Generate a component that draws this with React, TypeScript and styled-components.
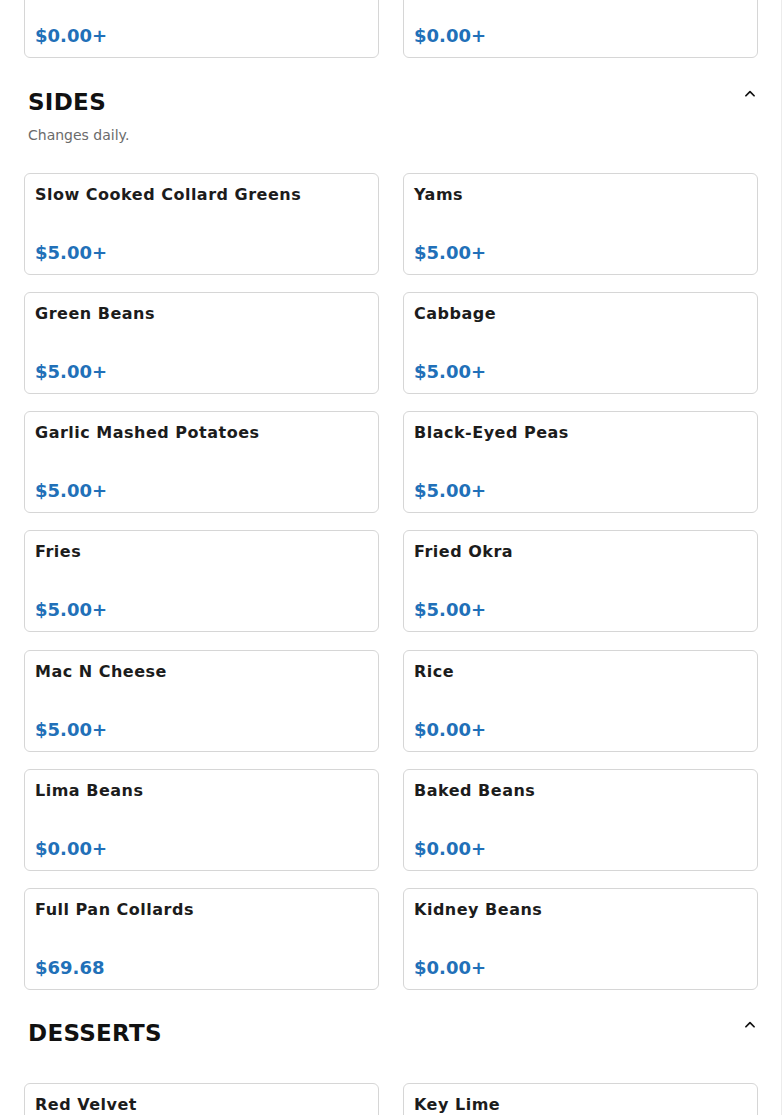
import React from 'react';
import styled, { createGlobalStyle } from 'styled-components';

const GlobalStyle = createGlobalStyle`
    html, body {
        margin: 0;
        padding: 0;
        background: #ffffff;
    }
    body {
        font-family: 'DejaVu Sans', 'Liberation Sans', sans-serif;
        color: #1a1a1a;
    }
    * {
        box-sizing: border-box;
    }
`;

const Page = styled.main`
    width: 782px;
    padding: 0 23px 40px 24px;
    border-right: 1px solid #ececec;
    overflow: hidden;
`;

// the row above "Sides" is scrolled half out of view
const ScrolledOff = styled.div`
    margin-top: -44px;
    padding-bottom: 1px;
`;

const Section = styled.section`
    padding-top: 29px;
`;

const SectionHeader = styled.div`
    display: flex;
    justify-content: space-between;
    align-items: flex-start;
    padding-left: 4px;
`;

const SectionTitle = styled.h2`
    margin: 0;
    font-size: 23px;
    line-height: 28px;
    font-weight: 700;
    letter-spacing: 0.3px;
    color: #111;
`;

const Toggle = styled.button`
    display: flex;
    align-items: center;
    justify-content: center;
    width: 16px;
    height: 16px;
    margin-top: -2px;
    padding: 0;
    border: none;
    background: none;
    color: #111;
`;

const Description = styled.p`
    margin: 9px 0 0 4px;
    font-size: 14px;
    line-height: 20px;
    color: #6b6b6b;
`;

const Grid = styled.div<{ $top?: number }>`
    display: grid;
    grid-template-columns: 1fr 1fr;
    column-gap: 24px;
    row-gap: 17.17px;
    margin-top: ${(props) => props.$top ?? 28}px;
`;

const Card = styled.div`
    border: 1px solid #d6d6d6;
    border-radius: 6px;
    padding: 11px 10px 9px 10px;
    display: flex;
    flex-direction: column;
    background: #fff;
`;

const ItemName = styled.div`
    font-size: 16px;
    line-height: 20px;
    font-weight: 700;
    letter-spacing: 0.5px;
    color: #1c1c1c;
`;

const Price = styled.div`
    margin-top: 36px;
    font-size: 18px;
    line-height: 24px;
    font-weight: 700;
    color: #2170b8;
`;

interface IItem {
    name: string;
    price: string;
}

const previous: IItem[] = [
    { name: 'Turkey Wings', price: '$0.00+' },
    { name: 'Oxtails', price: '$0.00+' },
];

const sides: IItem[] = [
    { name: 'Slow Cooked Collard Greens', price: '$5.00+' },
    { name: 'Yams', price: '$5.00+' },
    { name: 'Green Beans', price: '$5.00+' },
    { name: 'Cabbage', price: '$5.00+' },
    { name: 'Garlic Mashed Potatoes', price: '$5.00+' },
    { name: 'Black-Eyed Peas', price: '$5.00+' },
    { name: 'Fries', price: '$5.00+' },
    { name: 'Fried Okra', price: '$5.00+' },
    { name: 'Mac N Cheese', price: '$5.00+' },
    { name: 'Rice', price: '$0.00+' },
    { name: 'Lima Beans', price: '$0.00+' },
    { name: 'Baked Beans', price: '$0.00+' },
    { name: 'Full Pan Collards', price: '$69.68' },
    { name: 'Kidney Beans', price: '$0.00+' },
];

const desserts: IItem[] = [
    { name: 'Red Velvet', price: '$5.00+' },
    { name: 'Key Lime', price: '$5.00+' },
];

function ChevronUp() {
    return (
        <svg width="14" height="14" viewBox="0 0 24 24" fill="none" stroke="currentColor" strokeWidth="3" strokeLinecap="round" strokeLinejoin="round">
            <path d="M5 15l7-7 7 7" />
        </svg>
    );
}

function ItemCard({ item }: { item: IItem }) {
    return (
        <Card>
            <ItemName>{item.name}</ItemName>
            <Price>{item.price}</Price>
        </Card>
    );
}

function MenuSection({ title, description, items }: { title: string; description?: string; items: IItem[] }) {
    return (
        <Section>
            <SectionHeader>
                <SectionTitle>{title}</SectionTitle>
                <Toggle aria-label="Collapse">
                    <ChevronUp />
                </Toggle>
            </SectionHeader>
            {description && <Description>{description}</Description>}
            <Grid $top={description ? 28 : 36}>
                {items.map((item) => (
                    <ItemCard key={item.name} item={item} />
                ))}
            </Grid>
        </Section>
    );
}

export default function App() {
    return (
        <>
            <GlobalStyle />
            <Page>
                <ScrolledOff>
                    <Grid $top={0}>
                        {previous.map((item) => (
                            <ItemCard key={item.name} item={item} />
                        ))}
                    </Grid>
                </ScrolledOff>
                <MenuSection title="SIDES" description="Changes daily." items={sides} />
                <MenuSection title="DESSERTS" items={desserts} />
            </Page>
        </>
    );
}
